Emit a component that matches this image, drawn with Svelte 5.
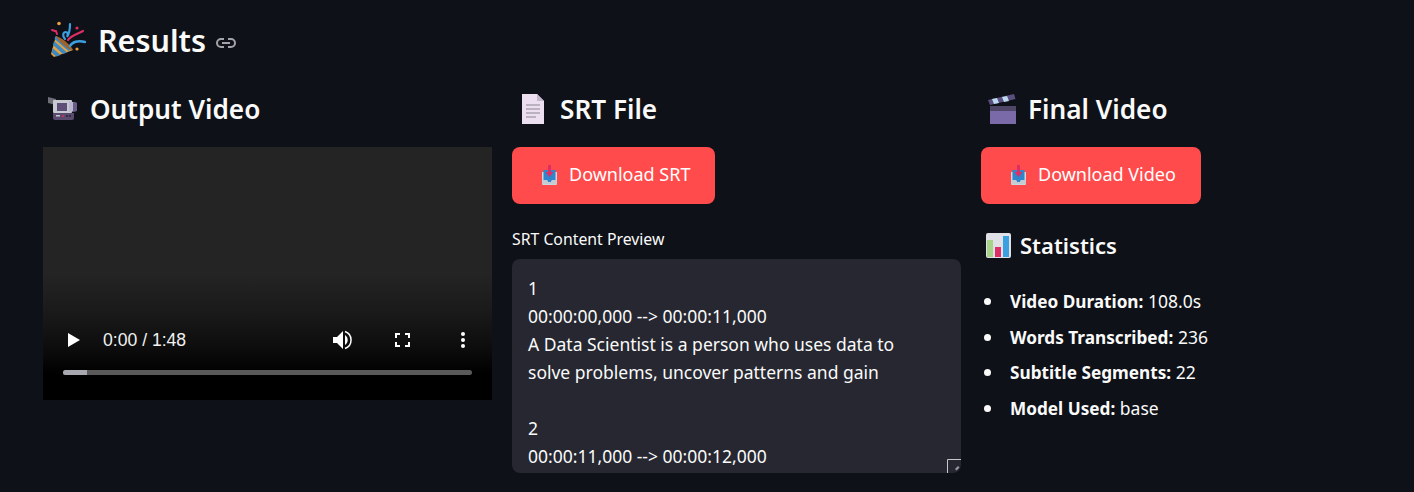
<script lang="ts">
	const stats = [
		['Video Duration:', '108.0s'],
		['Words Transcribed:', '236'],
		['Subtitle Segments:', '22'],
		['Model Used:', 'base']
	];
	const srt = `1
00:00:00,000 --> 00:00:11,000
A Data Scientist is a person who uses data to
solve problems, uncover patterns and gain

2
00:00:11,000 --> 00:00:12,000
`;
</script>

{#snippet inbox()}
	<svg class="inbox" viewBox="0 0 17 20" width="17" height="20">
		<path d="M1 7h15v12a1 1 0 0 1-1 1H2a1 1 0 0 1-1-1z" fill="#ccd6dd" />
		<path d="M2.500 5h12v10H11l-1 2H7l-1-2H2.500z" fill="#2f86cc" />
		<path d="M1 15h5l1 2h3l1-2h5v4H1z" fill="#c3ccd3" />
		<path d="M7 0h3v7h2.500l-4 5-4-5H7z" fill="#dd2e66" />
	</svg>
{/snippet}

<main>
	<h2>
		<svg class="party" viewBox="0 0 38 36" width="38" height="36">
			<path d="M3 33 L8 15 L25 29 L6 36 Z" fill="#e8a33d" />
			<path d="M4.500 27l8 7-4 1.500-4.500-3.500zM6 20l13 11.500-4 1.500-10-9zM7.500 15l16 13.500-3 1.500-14-12z" fill="#3b88c3" />
			<path d="M8 15c5 1 15 9 17 14-4 1-15-9-17-14z" fill="#a0622d" />
			<path d="M17 18c-3-3-2-7 1-7 2 0 2 3 1 5 2-3 3-8 3-13" fill="none" stroke-width="2.200" stroke-linecap="round" stroke="#3b9fe0" />
			<path d="M20 19c2-4 9-6 15-9" fill="none" stroke-width="2.200" stroke-linecap="round" stroke="#dd2e66" />
			<path d="M22 25c2-4 8-6 15-4" fill="none" stroke-width="2.500" stroke-linecap="round" stroke="#3b9fe0" />
			<path d="M4 9l3 1M8 10l1 3" fill="none" stroke-width="2" stroke-linecap="round" stroke="#dd2e66" />
			<circle cx="11" cy="2.500" r="1.800" fill="#e8a33d" /><circle cx="29" cy="7" r="1.600" fill="#dd2e66" /><circle cx="29" cy="28" r="1.600" fill="#e8a33d" />
		</svg>
		<span>Results</span>
		<svg class="link" viewBox="0 0 20 10" width="20" height="10" fill="none" stroke="#a3a3a8" stroke-width="2">
			<path d="M8 1H5a4 4 0 0 0 0 8h3M12 1h3a4 4 0 0 1 0 8h-3M6 5h8" />
		</svg>
	</h2>

	<div class="cols">
		<section>
			<h3>
				<svg class="ico" viewBox="0 0 30 24" width="30" height="24">
					<path d="M0 0l8 2v6L0 6z" fill="#6e6e78" />
					<rect x="5" y="3" width="19" height="13" rx="1" fill="#c8cad2" />
					<rect x="9" y="6" width="10" height="8" fill="#5e4f78" />
					<path d="M21 4l8 2v8l-8 1z" fill="#b9b6d0" />
					<path d="M25 5l4 1v8l-4 .500z" fill="#6b5b8a" />
					<path d="M5 16h21v5a2 2 0 0 1-2 2H7a2 2 0 0 1-2-2z" fill="#5a4a70" />
					<rect x="8" y="18" width="4" height="1.500" fill="#c8cad2" />
					<circle cx="15" cy="19" r="1" fill="#dd2e66" />
					<circle cx="19" cy="19" r="1" fill="#2a2433" /><circle cx="22" cy="19" r="1" fill="#2a2433" />
				</svg>
				Output Video
			</h3>
			<div class="video">
				<div class="controls">
					<svg class="play" viewBox="0 0 12 14" width="12" height="14"><path d="M0 0l12 7-12 7z" fill="#fff" /></svg>
					<span class="time">0:00 / 1:48</span>
					<svg class="vol" viewBox="0 0 20 20" width="20" height="20">
						<path d="M0 7v6h4l6 6V1L4 7z" fill="#fff" />
						<path d="M12 5a6 6 0 0 1 0 10z" fill="#fff" />
						<path d="M12 1.500a9 9 0 0 1 0 17" fill="none" stroke="#fff" stroke-width="1.500" />
					</svg>
					<svg class="full" viewBox="0 0 15 14" width="15" height="14" fill="none" stroke="#fff" stroke-width="2">
						<path d="M1 5V1h4M10 1h4v4M14 9v4h-4M5 13H1V9" />
					</svg>
					<svg class="more" viewBox="0 0 6 18" width="6" height="18" fill="#fff">
						<circle cx="3" cy="3" r="2" /><circle cx="3" cy="9" r="2" /><circle cx="3" cy="15" r="2" />
					</svg>
				</div>
				<div class="track"><div class="played"></div></div>
			</div>
		</section>

		<section>
			<h3 class="wide">
				<svg class="ico doc" viewBox="0 0 24 30" width="24" height="30">
					<path d="M1 0h15l7 7v23H1z" fill="#ecdff0" />
					<path d="M16 0l7 7h-7z" fill="#c4b6cc" />
					<path d="M5 11h14M5 15h14M5 19h14M5 23h10" stroke="#a9a4b0" stroke-width="1.500" />
				</svg>
				SRT File
			</h3>
			<button type="button" class="dl">{@render inbox()}<span>Download SRT</span></button>
			<div class="label">SRT Content Preview</div>
			<div class="area">
				<pre>{srt}</pre>
				<svg class="grip" viewBox="0 0 14 14" width="14" height="14">
					<path d="M.5 14V.5H14" fill="none" stroke="#c8c8cc" />
					<path d="M8 10l3-3 1.500 1.500-3 3z" fill="#9a9aa0" />
				</svg>
			</div>
		</section>

		<section>
			<h3 class="wide">
				<svg class="ico" viewBox="0 0 28 30" width="28" height="30">
					<rect x="2" y="12" width="26" height="18" fill="#7a6aa8" />
					<rect x="2" y="12" width="26" height="5" fill="#4f4668" />
					<path d="M0 6L26 0l1.500 5L2 11z" fill="#5a4f80" />
					<path d="M4 5l5-1 2 5-5 1zM14 3l5-1 2 5-5 1z" fill="#bcd9ee" />
				</svg>
				Final Video
			</h3>
			<button type="button" class="dl">{@render inbox()}<span>Download Video</span></button>
			<h4>
				<svg viewBox="0 0 25 25" width="25" height="25">
					<rect width="25" height="25" rx="2" fill="#dfe1e6" />
					<rect x="1" y="7" width="6" height="17" fill="#a6d388" />
					<rect x="9" y="14" width="6" height="10" fill="#dd2e66" />
					<rect x="17" y="3" width="6" height="21" fill="#3b9fe0" />
				</svg>
				Statistics
			</h4>
			<ul>
				{#each stats as [name, value] (name)}
					<li><strong>{name}</strong> {value}</li>
				{/each}
			</ul>
		</section>
	</div>
</main>

<style>
	:global(body) {
		margin: 0;
		background: #0e1117;
		overflow: hidden;
	}

	main {
		height: 492px;
		overflow: hidden;
		padding: 16px 0 0 43px;
		box-sizing: border-box;
		color: #fafafa;
		font-family: 'Noto Sans', sans-serif;
		font-size: 17.500px;
	}

	h2 {
		display: flex;
		align-items: center;
		height: 48px;
		margin: 0 0 25px;
		padding-left: 5px;
		font-size: 30.500px;
		font-weight: 600;
	}

	h2 .party {
		margin-right: 12px;
		margin-top: -2px;
	}

	h2 .link {
		margin: 6px 0 0 10px;
	}

	.cols {
		display: grid;
		grid-template-columns: repeat(3, 449px);
		gap: 20px;
	}

	h3 {
		display: flex;
		align-items: center;
		gap: 12px;
		height: 40px;
		margin: 0 0 18px;
		padding-left: 5px;
		font-size: 26.200px;
		font-weight: 600;
		line-height: 38px;
	}

	h3.wide {
		padding-left: 7px;
	}

	.doc {
		margin: 0 3px 0 2px;
	}

	.video {
		position: relative;
		height: 253px;
		background: linear-gradient(#242424 0, #242424 50%, #1a1a1a 65%, #0e0e0e 78%, #000 90%);
	}

	.controls {
		position: absolute;
		left: 0;
		right: 0;
		top: 181px;
		display: flex;
		align-items: center;
		height: 24px;
		padding: 0 26px 0 25px;
	}

	.time {
		margin-left: 23px;
		font: 17.600px 'Liberation Sans', Arial, sans-serif;
		color: #f1f1f1;
		flex: 1;
	}

	.vol {
		margin-right: 42px;
	}

	.full {
		margin-right: 50px;
	}

	.track {
		position: absolute;
		left: 20px;
		right: 20px;
		top: 223px;
		height: 5px;
		background: #5a5a5a;
		border-radius: 3px;
		overflow: hidden;
	}

	.played {
		width: 24px;
		height: 100%;
		background: #a8a8b0;
	}

	.dl {
		display: flex;
		align-items: center;
		justify-content: center;
		height: 57px;
		padding: 0 25px 0 29px;
		border: 0;
		border-radius: 8px;
		background: #ff4b4b;
		color: #fff;
		font: inherit;
		font-size: 18px;
	}

	.dl span {
		margin-top: -4px;
	}

	.inbox {
		margin-right: 11px;
		margin-top: -2px;
	}

	.label {
		margin: 25px 0 10px;
		font-size: 15.800px;
		line-height: 20px;
	}

	.area {
		position: relative;
		height: 214px;
		overflow: hidden;
		background: #262730;
		border-radius: 8px;
	}

	pre {
		margin: 0;
		padding: 15px 16px;
		font: inherit;
		line-height: 28px;
		white-space: pre-wrap;
	}

	.grip {
		position: absolute;
		right: 0;
		bottom: 0;
	}

	h4 {
		display: flex;
		align-items: center;
		gap: 9px;
		height: 34px;
		margin: 24px 0 22px 5px;
		font-size: 22px;
		font-weight: 600;
	}

	ul {
		margin: 0;
		padding: 0 0 0 29px;
		list-style: none;
		line-height: 35.700px;
	}

	li {
		position: relative;
	}

	li::before {
		content: '';
		position: absolute;
		left: -26px;
		top: 14px;
		width: 7px;
		height: 7px;
		border-radius: 50%;
		background: #fafafa;
	}

	strong {
		font-size: 17.200px;
	}
</style>
